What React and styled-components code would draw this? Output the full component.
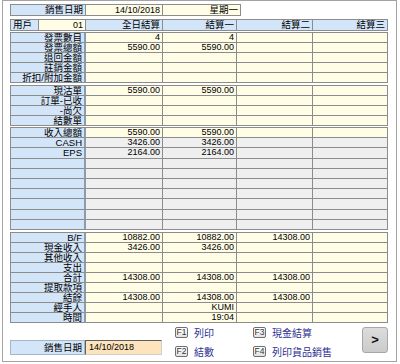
import React from "react";
import styled, { createGlobalStyle } from "styled-components";

const GlobalStyle = createGlobalStyle`
  html, body {
    margin: 0;
    background: #fff;
  }
  body {
    font-family: "Liberation Sans", "Noto Sans CJK TC", sans-serif;
  }
`;

const BLUE = "#d3e5f8";
const YELLOW = "#fffde6";
const GRAY = "#efefef";
const LINE = "#8c8c8c";

const Frame = styled.div`
  box-sizing: border-box;
  width: 395px;
  height: 362px;
  margin-left: 2px;
  border: 1px solid #a3a3a3;
  padding: 3px 0 0 7px;
  font-size: 9px;
  color: #000;
`;

const Strip = styled.div`
  display: grid;
  grid-template-columns: ${(p) => p.$cols};
  width: max-content;
  margin-top: ${(p) => p.$mt || 0}px;
  border-top: 1px solid ${LINE};
  border-left: 1px solid ${LINE};
`;

const Cell = styled.div`
  box-sizing: border-box;
  height: ${(p) => p.$h || 11}px;
  line-height: ${(p) => (p.$h || 11) - 1}px;
  padding: 0 2px;
  background: ${(p) => p.$bg};
  text-align: ${(p) => p.$align || "right"};
  border-right: 1px solid ${LINE};
  border-bottom: 1px solid ${LINE};
  white-space: nowrap;
  overflow: hidden;
  font-size: ${(p) => (p.$label ? 9.5 : 9)}px;
`;

const Group = styled.div`
  display: grid;
  grid-template-columns: 75px 77px 74px 76px 75px;
  grid-auto-rows: ${(p) => p.$rowH}px;
  width: max-content;
  margin-top: ${(p) => p.$mt}px;
  border-top: 1px solid ${LINE};
  border-left: 1px solid ${LINE};
`;

const GCell = styled.div`
  box-sizing: border-box;
  padding: 0 2px;
  display: flex;
  align-items: center;
  justify-content: flex-end;
  background: ${(p) => p.$bg};
  border-right: ${(p) => (p.$thick ? `2px solid #8d9cad` : `1px solid ${LINE}`)};
  border-bottom: 1px solid ${LINE};
  white-space: nowrap;
  overflow: hidden;
  font-size: ${(p) => (p.$label ? 9.5 : 9)}px;
  line-height: 1;
`;

const Footer = styled.div`
  display: flex;
  align-items: flex-start;
  margin-top: 4px;
  padding-right: 8px;
`;

const DateBlock = styled.div`
  display: flex;
  margin-top: 13px;
`;

const DateLabel = styled.div`
  box-sizing: border-box;
  width: 75px;
  height: 15px;
  line-height: 14px;
  padding-right: 2px;
  text-align: right;
  background: ${BLUE};
  border: 1px solid #a6b6c6;
  font-size: 9.5px;
`;

const DateInput = styled.div`
  box-sizing: border-box;
  width: 77px;
  height: 15px;
  line-height: 13px;
  padding-left: 3px;
  background: #fde4bd;
  border-top: 1px solid #5e5e5e;
  border-left: 1px solid #5e5e5e;
  border-right: 1px solid #cfcfcf;
  border-bottom: 1px solid #cfcfcf;
  font-size: 9px;
`;

const Keys = styled.div`
  display: grid;
  grid-template-columns: 78px auto;
  row-gap: 8px;
  margin-left: 13px;
`;

const KeyItem = styled.div`
  display: flex;
  align-items: center;
  height: 11px;
`;

const KeyCap = styled.span`
  box-sizing: border-box;
  width: 13px;
  height: 11px;
  border: 1px solid #707070;
  border-radius: 2px;
  background: linear-gradient(#ffffff, #e2e2e2);
  font-size: 8.5px;
  line-height: 9px;
  text-align: center;
  color: #333;
`;

const KeyText = styled.span`
  margin-left: 6px;
  font-size: 10px;
  color: #2e3192;
`;

const NextButton = styled.button`
  box-sizing: border-box;
  margin-left: auto;
  width: 26px;
  height: 26px;
  padding: 0;
  border: 1px solid #a7a7a7;
  border-radius: 3px;
  background: linear-gradient(#dcdcdc, #cbcbcb);
  font-family: "Liberation Sans", sans-serif;
  font-size: 13px;
  font-weight: bold;
  color: #111;
`;

const groups = [
  {
    mt: 1,
    rowH: 10,
    rows: [
      ["發票數目", "4", "4"],
      ["發票總額", "5590.00", "5590.00"],
      ["退回金額"],
      ["註銷金額"],
      ["折扣/附加金額"],
    ],
  },
  {
    mt: 2,
    rowH: 10,
    rows: [["現沽單", "5590.00", "5590.00"], ["訂單-已收"], ["-尚欠"], ["結數單"]],
  },
  {
    mt: 1,
    rowH: 10.2,
    gray: true,
    rows: [
      ["收入總額", "5590.00", "5590.00"],
      ["CASH", "3426.00", "3426.00"],
      ["EPS", "2164.00", "2164.00"],
      [],
      [],
      [],
      [],
      [],
      [],
      [],
    ],
  },
  {
    mt: 2,
    rowH: 10,
    rows: [
      ["B/F", "10882.00", "10882.00", "14308.00"],
      ["現金收入", "3426.00", "3426.00"],
      ["其他收入"],
      ["支出"],
      ["合計", "14308.00", "14308.00", "14308.00"],
      ["提取款項"],
      ["結餘", "14308.00", "14308.00", "14308.00"],
      ["經手人", "", "KUMI"],
      ["時間", "", "19:04"],
    ],
  },
];

const headers = ["全日結算", "結算一", "結算二", "結算三"];

const keys = [
  ["F1", "列印"],
  ["F3", "現金結算"],
  ["F2", "結數"],
  ["F4", "列印貨品銷售"],
];

export default function App() {
  return (
    <>
      <GlobalStyle />
      <Frame>
        <Strip $cols="75px 77px 78px">
          <Cell $bg={BLUE} $label>銷售日期</Cell>
          <Cell $bg={YELLOW}>14/10/2018</Cell>
          <Cell $bg={YELLOW} $label>星期一</Cell>
        </Strip>
        <Strip $cols="28px 47px 77px 74px 76px 75px" $mt={3}>
          <Cell $bg={BLUE} $align="left" $label>用戶</Cell>
          <Cell $bg={YELLOW}>01</Cell>
          {headers.map((h) => (
            <Cell key={h} $bg={BLUE} $label>
              {h}
            </Cell>
          ))}
        </Strip>
        {groups.map((g, gi) => (
          <Group key={gi} $mt={g.mt} $rowH={g.rowH}>
            {g.rows.map((r, ri) => {
              const bg = g.gray && ri > 0 ? GRAY : YELLOW;
              return (
                <React.Fragment key={ri}>
                  <GCell $bg={BLUE} $thick $label>
                    {r[0] || ""}
                  </GCell>
                  {[1, 2, 3, 4].map((c) => (
                    <GCell key={c} $bg={bg}>
                      {r[c] || ""}
                    </GCell>
                  ))}
                </React.Fragment>
              );
            })}
          </Group>
        ))}
        <Footer>
          <DateBlock>
            <DateLabel>銷售日期</DateLabel>
            <DateInput>14/10/2018</DateInput>
          </DateBlock>
          <Keys>
            {keys.map(([k, t]) => (
              <KeyItem key={k}>
                <KeyCap>{k}</KeyCap>
                <KeyText>{t}</KeyText>
              </KeyItem>
            ))}
          </Keys>
          <NextButton>&gt;</NextButton>
        </Footer>
      </Frame>
    </>
  );
}
